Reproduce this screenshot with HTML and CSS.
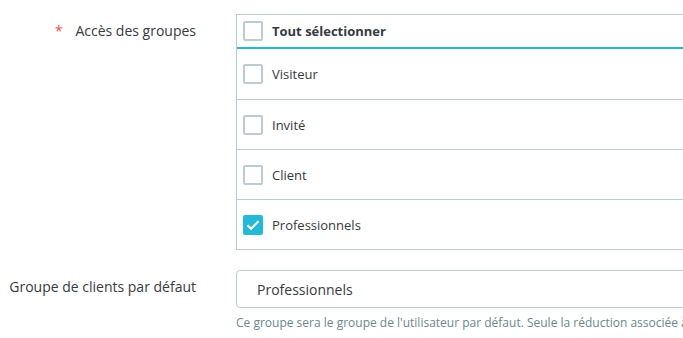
FILE: index.html
```html
<!DOCTYPE html>
<html lang="fr">
<head>
  <meta charset="UTF-8" />
  <title>Accès des groupes</title>
  <link rel="stylesheet" href="styles.css">
</head>
<body>
  <form class="form">
    <div class="form-group">
      <label class="form-label"><span class="required">*</span> Accès des groupes</label>
      <div class="field">
        <div class="choice-table">
          <div class="choice-head">
            <span class="checkbox"></span>
            <span>Tout sélectionner</span>
          </div>
          <div class="choice-row">
            <span class="checkbox"></span>
            <span>Visiteur</span>
          </div>
          <div class="choice-row">
            <span class="checkbox"></span>
            <span>Invité</span>
          </div>
          <div class="choice-row">
            <span class="checkbox"></span>
            <span>Client</span>
          </div>
          <div class="choice-row">
            <span class="checkbox checked">
              <svg width="16" height="16" viewBox="0 0 16 16"><path d="M2.5 8.2l3.6 3.6L13.5 4.2" fill="none" stroke="#fff" stroke-width="2"/></svg>
            </span>
            <span>Professionnels</span>
          </div>
        </div>
      </div>
    </div>

    <div class="form-group second">
      <label class="form-label">Groupe de clients par défaut</label>
      <div class="field">
        <div class="select">Professionnels</div>
        <small class="help">Ce groupe sera le groupe de l'utilisateur par défaut. Seule la réduction associée à ce groupe sera appliquée aux produits du client.</small>
      </div>
    </div>
  </form>
</body>
</html>
```

FILE: styles.css
```css
body {
  margin: 0;
  background: #fff;
  font-family: 'Open Sans', 'Noto Sans', sans-serif;
  font-size: 14px;
  color: #363a41;
  overflow: hidden;
}

.form {
  padding-top: 14px;
}

.form-group {
  display: grid;
  grid-template-columns: 196px 900px;
  column-gap: 40px;
}

.form-group.second {
  margin-top: 20px;
}

.form-label {
  text-align: right;
  padding-top: 7px;
  line-height: 20px;
}

.second .form-label {
  padding-top: 7px;
}

.required {
  color: #f54c3e;
  margin-right: 9px;
}

.choice-table {
  border: 1px solid #bbcdd2;
}

.choice-head,
.choice-row {
  display: flex;
  align-items: center;
  gap: 9px;
  padding-left: 6px;
  box-sizing: border-box;
}

.choice-head {
  height: 34px;
  font-weight: 700;
  font-size: 13px;
  border-bottom: 2px solid #25b9d7;
}

.choice-row {
  height: 50px;
  font-size: 13px;
  border-top: 1px solid #bbcdd2;
}

.choice-head + .choice-row {
  border-top: none;
}

.checkbox {
  width: 20px;
  height: 20px;
  box-sizing: border-box;
  border: 2px solid #bbcdd2;
  border-radius: 2px;
  display: flex;
  align-items: center;
  justify-content: center;
}

.checkbox.checked {
  background: #25b9d7;
  border-color: #25b9d7;
}

.select {
  height: 38px;
  box-sizing: border-box;
  border: 1px solid #bbcdd2;
  border-radius: 4px;
  padding: 0 20px;
  display: flex;
  align-items: center;
  font-size: 14px;
}

.help {
  display: block;
  margin-top: 6px;
  font-size: 12px;
  color: #6c868e;
  white-space: nowrap;
}
```
